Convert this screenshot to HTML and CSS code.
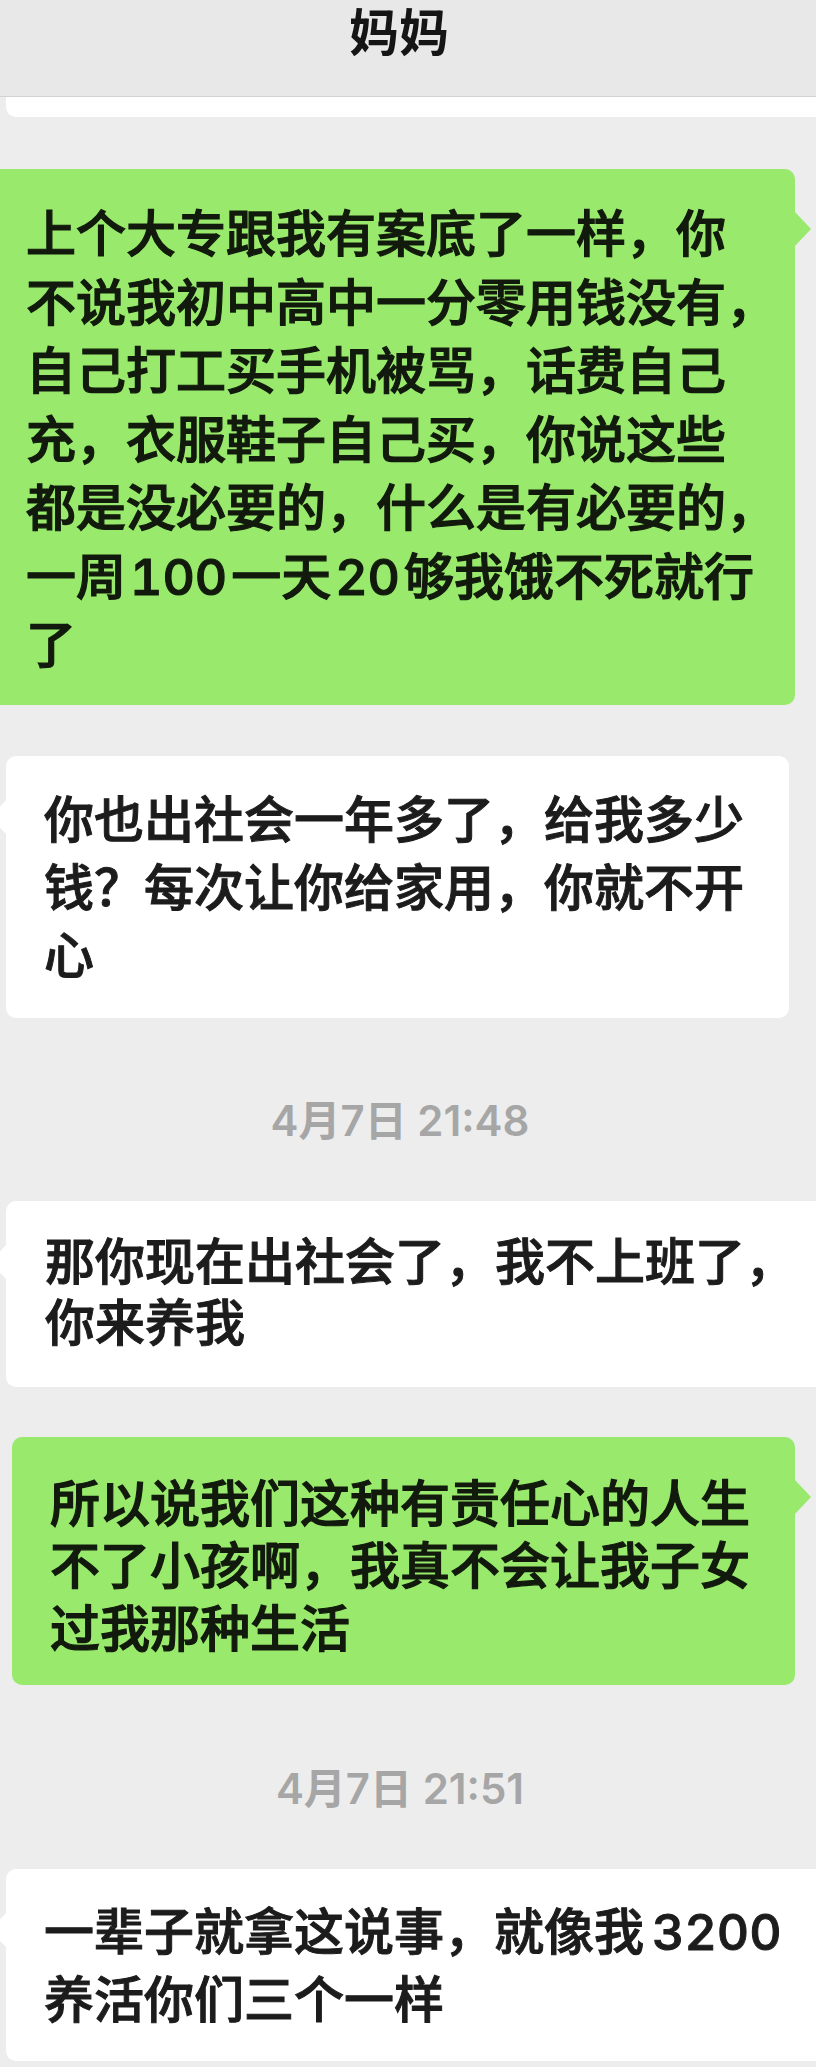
FILE: index.html
```html
<!DOCTYPE html>
<html lang="zh-CN">
<head>
<meta charset="utf-8">
<title>妈妈</title>
<link rel="stylesheet" href="styles.css">
</head>
<body>
<div class="chat">
  <header class="topbar">
    <h1 class="title">妈妈</h1>
  </header>
  <main class="msgs">
    <div class="bubble-cut"></div>

    <div class="bubble bubble--out b1">上个大专跟我有案底了一样，你<br>不说我初中高中一分零用钱没有，<br>自己打工买手机被骂，话费自己<br>充，衣服鞋子自己买，你说这些<br>都是没必要的，什么是有必要的，<br>一周<span class="num">100</span>一天<span class="num">20</span>够我饿不死就行<br>了</div>

    <div class="bubble bubble--in b2">你也出社会一年多了，给我多少<br>钱？每次让你给家用，你就不开<br>心</div>

    <div class="stamp stamp1">4月7日 21:48</div>

    <div class="bubble bubble--in b3">那你现在出社会了，我不上班了，<br>你来养我</div>

    <div class="bubble bubble--out b4">所以说我们这种有责任心的人生<br>不了小孩啊，我真不会让我子女<br>过我那种生活</div>

    <div class="stamp stamp2">4月7日 21:51</div>

    <div class="bubble bubble--in b5">一辈子就拿这说事，就像我<span class="num num--end">3200</span><br>养活你们三个一样</div>
  </main>
</div>
</body>
</html>
```

FILE: styles.css
```css
* {
  box-sizing: border-box;
}

html,
body {
  margin: 0;
  padding: 0;
}

body {
  background: #ededed;
  font-family: Inter, "Noto Sans CJK SC", sans-serif;
  overflow: hidden;
}

.chat {
  width: 816px;
  height: 2067px;
  overflow: hidden;
  display: flex;
  flex-direction: column;
}

.topbar {
  height: 97px;
  flex: none;
  background: #e8e8e8;
  border-bottom: 1px solid #d2d2d2;
  display: flex;
  justify-content: center;
  padding-right: 18px;
}

.title {
  margin: 0;
  padding-top: 4px;
  font-size: 50px;
  line-height: 58px;
  font-weight: 700;
  color: #151515;
}

.msgs {
  display: flex;
  flex-direction: column;
}

.bubble-cut {
  height: 20px;
  margin: 0 -20px 0 6px;
  background: #ffffff;
  border-radius: 0 0 10px 10px;
}

.bubble {
  position: relative;
  font-size: 50px;
  font-weight: 500;
  white-space: nowrap;
  border-radius: 10px;
  color: #161616;
  -webkit-text-stroke: 1.2px currentColor;
}

.bubble--in {
  background: #ffffff;
  color: #1c1c1c;
  -webkit-text-stroke-width: 1px;
}

.bubble--out {
  background: #98e96c;
  color: #111a0c;
}

.bubble--in::before {
  content: "";
  position: absolute;
  left: -16px;
  top: 44px;
  border-right: 16px solid #ffffff;
  border-top: 17px solid transparent;
  border-bottom: 17px solid transparent;
}

.bubble--out::after {
  content: "";
  position: absolute;
  right: -16px;
  top: 43px;
  border-left: 16px solid #98e96c;
  border-top: 17px solid transparent;
  border-bottom: 17px solid transparent;
}

.b1 {
  margin: 52px 21px 0 -12px;
  padding: 31px 0 25px 38px;
  line-height: 68.5px;
}

.b2 {
  margin: 51px 27px 0 6px;
  padding: 30px 0 28px 38px;
  line-height: 68px;
}

.b3 {
  margin: 0 -20px 0 6px;
  padding: 31px 0 32px 39px;
  line-height: 61.5px;
}

.b4 {
  margin: 50px 21px 0 12px;
  padding: 36px 0 25px 38px;
  line-height: 62.5px;
}

.b5 {
  margin: 0 -20px 0 6px;
  padding: 29px 0 27px 38px;
  line-height: 68px;
}

.num {
  margin: 0 4px;
  font-variant-numeric: tabular-nums;
}

.num--end {
  margin: 0 0 0 8px;
}

.stamp {
  text-align: center;
  font-size: 42px;
  line-height: 40px;
  font-weight: 600;
  color: #a6a6a6;
  padding-right: 16px;
}

.stamp1 {
  margin: 83px 0 60px;
}

.stamp2 {
  margin: 84px 0 60px;
}
```
